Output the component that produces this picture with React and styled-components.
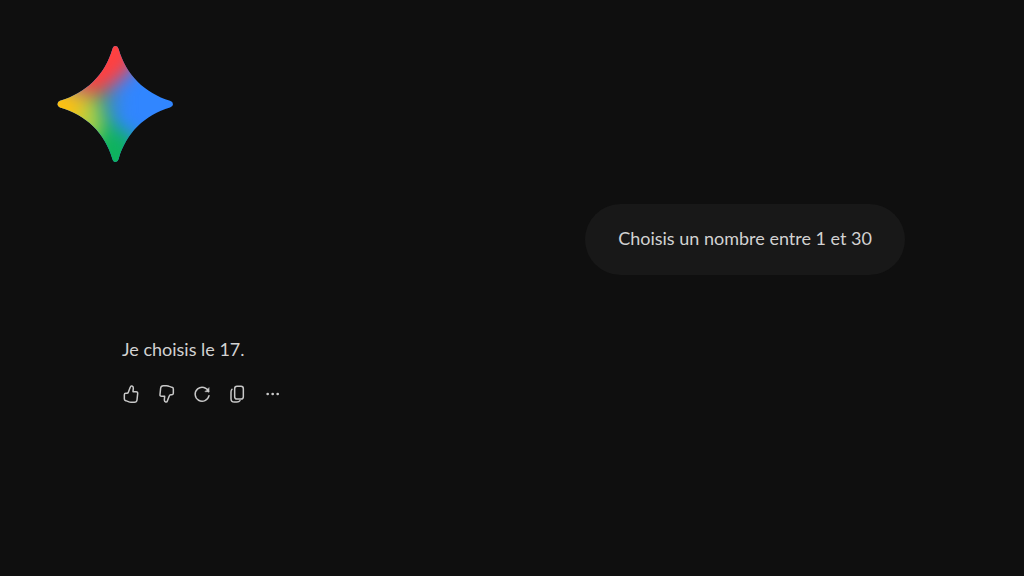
import React from 'react';
import styled, { createGlobalStyle } from 'styled-components';

const GlobalStyle = createGlobalStyle`
  * {
    box-sizing: border-box;
  }

  body {
    margin: 0;
    background-color: #0f0f0f;
    color: #d2d2d2;
    font-family: Lato, 'Open Sans', sans-serif;
  }
`;

const Page = styled.div`
  min-height: 100vh;
`;

const Header = styled.header`
  display: flex;
  padding: 44px 55px 40px;
`;

const Logo = styled.svg`
  width: 120px;
  height: 120px;
`;

const Conversation = styled.main`
  display: flex;
  flex-direction: column;
  gap: 59px;
  padding: 0 119px 40px 122px;
`;

const UserMessage = styled.p`
  align-self: flex-end;
  margin: 0;
  padding: 22px 33px 24px;
  border-radius: 36px;
  background-color: #181818;
  font-size: 18px;
  line-height: 25px;
`;

const Answer = styled.article`
  display: flex;
  flex-direction: column;
  gap: 20px;
`;

const AnswerText = styled.p`
  margin: 0;
  font-size: 18px;
  line-height: 30px;
`;

const Actions = styled.div`
  display: flex;
  gap: 15px;
`;

const ActionButton = styled.button`
  display: flex;
  width: 20px;
  height: 20px;
  padding: 0;
  border: none;
  background: none;
  color: #c8c8c8;
  cursor: pointer;
`;

const Icon = styled.svg`
  width: 20px;
  height: 20px;
  fill: none;
  stroke: currentColor;
  stroke-width: 4.5;
  stroke-linecap: round;
  stroke-linejoin: round;
`;

const THUMB = 'M11 28 H15 Q18 28 19 25 L25 9 Q26 5 30 6 Q34 7 34 12 L33 23 H42 Q48 23 47 29 L45 48 Q44 55 37 55 H27 Q23 55 19 53 L11 50 Q7 49 7 45 V32 Q7 28 11 28 Z';

const STAR = 'M60.5 2 Q62.8 2 63.6 5 C71 31 90 49 115 56.8 Q118 57.8 118 60.2 Q118 62.6 115 63.6 C90 71 71 89 63.6 115 Q62.8 118 60.5 118 Q58.2 118 57.4 115 C50 89 31 71 5 63.6 Q2.5 62.6 2.5 60.2 Q2.5 57.8 5 56.8 C31 49 50 31 57.4 5 Q58.2 2 60.5 2 Z';

const Sparkle = () => (
  <Logo viewBox="0 0 120 120" role="img" aria-label="Gemini">
    <defs>
      <clipPath id="star">
        <path d={STAR} />
      </clipPath>
      <filter id="blend" x="-50%" y="-50%" width="200%" height="200%" colorInterpolationFilters="sRGB">
        <feGaussianBlur stdDeviation="9" />
      </filter>
    </defs>
    <g clipPath="url(#star)">
      <rect width="120" height="120" fill="#3186ff" />
      <g filter="url(#blend)">
        <path d="M-20 64 L50 40 L58 72 L62 84 L82 94 V150 H-20 Z" fill="#0eb25e" />
        <path d="M-20 62 L34 48 L44 58 L48 84 L36 102 L-20 110 Z" fill="#b0d048" />
        <path d="M0 -30 H94 L76 26 L60 40 L46 50 L28 52 Z" fill="#ff4040" />
        <path d="M50 46 L60 40 L64 60 L58 78 L48 66 Z" fill="#3f8ac0" />
        <path d="M-30 30 L18 44 L30 60 L18 84 L-30 80 Z" fill="#ffc010" />
      </g>
    </g>
  </Logo>
);

const actions = [
  { label: 'Bonne réponse', icon: <path d={THUMB} /> },
  { label: 'Mauvaise réponse', icon: <path d={THUMB} transform="rotate(180 28 30)" /> },
  {
    label: 'Régénérer',
    icon: (
      <>
        <path d="M50 23 A21 21 0 1 0 51 35" />
        <path d="M51 12 V23 H40 Z" fill="currentColor" strokeWidth="2" />
      </>
    ),
  },
  {
    label: 'Copier',
    icon: (
      <>
        <rect x="23" y="7" width="26" height="38" rx="7" />
        <path d="M15 16 Q12 19 12 24 V44 Q12 54 22 54 H30 Q36 54 39 50" />
      </>
    ),
  },
  {
    label: 'Plus',
    icon: (
      <g fill="currentColor" stroke="none">
        <circle cx="17" cy="30" r="4" />
        <circle cx="32" cy="30" r="4" />
        <circle cx="47" cy="30" r="4" />
      </g>
    ),
  },
];

const App = () => {
  return (
    <Page>
      <GlobalStyle />
      <Header>
        <Sparkle />
      </Header>
      <Conversation>
        <UserMessage>Choisis un nombre entre 1 et 30</UserMessage>
        <Answer>
          <AnswerText>Je choisis le 17.</AnswerText>
          <Actions>
            {actions.map(({ label, icon }) => (
              <ActionButton key={label} type="button" aria-label={label}>
                <Icon viewBox="0 0 60 60" aria-hidden="true">{icon}</Icon>
              </ActionButton>
            ))}
          </Actions>
        </Answer>
      </Conversation>
    </Page>
  );
};

export default App;
